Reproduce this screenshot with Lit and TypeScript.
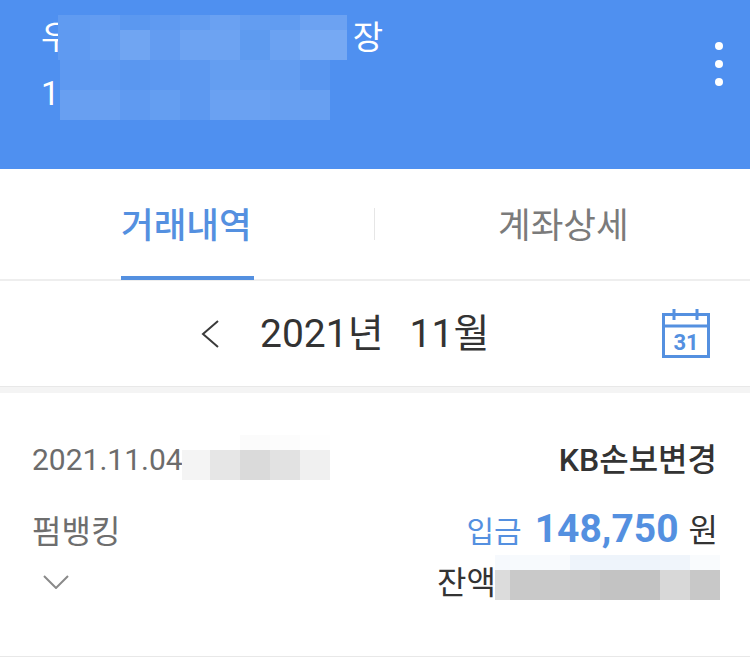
import { LitElement, html, css } from "lit";
import { customElement } from "lit/decorators.js";

type Mosaic = { cols: number[]; rows: number[]; colors: string[][] };

const headerMosaic: Mosaic = {
  cols: [32, 30, 30, 30, 30, 30, 30, 30, 47],
  rows: [15, 30, 30, 30],
  colors: [
    ["#609bf1", "#639cf1", "#5b98f0", "#5f9af1", "#639df1", "#6aa1f2", "#639df1", "#619cf1", "#6ca2f2"],
    ["#5f9af1", "#659ef1", "#70a5f2", "#639cf1", "#6da3f2", "#6da3f2", "#5e9bf0", "#6ba2f2", "#76a9f3"],
    ["#5e99f1", "#5e99f1", "#5a97f0", "#5c98f1", "#5d99f1", "#649ef1", "#649ef1", "#639df1", "#5996f0"],
    ["#689ff1", "#689ff1", "#5f9af1", "#649ef1", "#5d99f1", "#6aa1f2", "#6aa1f2", "#679ff1", "#679ff1"],
  ],
};
const dateMosaic: Mosaic = {
  cols: [28, 30, 30, 30, 30],
  rows: [15, 30],
  colors: [
    ["#ffffff", "#ffffff", "#fbfbfb", "#fcfcfc", "#fefefe"],
    ["#f4f4f4", "#e6e6e6", "#dadada", "#e2e2e2", "#f0f0f0"],
  ],
};
const balanceMosaic: Mosaic = {
  cols: [15, 30, 30, 30, 30, 30, 30, 30],
  rows: [15, 30],
  colors: [
    ["#f6f9fd", "#f7fafd", "#f8fafd", "#eef4fb", "#eef4fb", "#eef4fb", "#f0f5fb", "#f9fbfd"],
    ["#dcdcdc", "#c9c9c9", "#c9c9c9", "#c8c8c8", "#c3c3c3", "#c3c3c3", "#d8d8d8", "#c8c8c8"],
  ],
};

function mosaic(m: Mosaic, extra: string) {
  return html`<div
    class="mosaic ${extra}"
    style="grid-template-columns:${m.cols.map((c) => c + "px").join(" ")};grid-template-rows:${m.rows
      .map((r) => r + "px")
      .join(" ")}"
  >
    ${m.colors.flat().map((c) => html`<i style="background:${c}"></i>`)}
  </div>`;
}

@customElement("app-root")
export class AppRoot extends LitElement {
  static styles = css`
    :host {
      display: block;
      width: 750px;
      height: 657px;
      overflow: hidden;
      background: #fff;
      font-family: Roboto, "Noto Sans CJK KR", sans-serif;
    }
    .head {
      position: relative;
      height: 169px;
      box-sizing: border-box;
      padding: 15px 27px 0 41px;
      background: #4f90f0;
      color: #fff;
      font-size: 33px;
      line-height: 45px;
      display: flex;
      justify-content: space-between;
    }
    .title {
      display: flex;
      flex-direction: column;
      gap: 11px;
      width: 342px;
    }
    .title .line1 {
      display: flex;
      justify-content: space-between;
    }
    .mosaic {
      position: absolute;
      display: grid;
    }
    .mosaic i {
      display: block;
    }
    .m-head {
      left: 58px;
      top: 15px;
      clip-path: polygon(2px 45px, 289px 45px, 289px 0, 0 0, 0 45px, 2px 45px, 2px 105px, 272px 105px, 272px 45px);
    }
    .dots {
      display: flex;
      flex-direction: column;
      gap: 10px;
      padding-top: 27px;
    }
    .dots span {
      width: 8px;
      height: 8px;
      border-radius: 50%;
      background: #fff;
    }
    .tabs {
      position: relative;
      height: 112px;
      box-sizing: border-box;
      display: grid;
      grid-template-columns: 375px 375px;
      border-bottom: 2px solid #eeeeee;
    }
    .tab {
      display: flex;
      align-items: center;
      font-size: 35.5px;
      font-weight: 500;
      color: #7b7b7b;
      padding-bottom: 4px;
    }
    .tab.one {
      position: relative;
      color: #5490e0;
      padding-left: 121px;
    }
    .tab.two {
      padding-left: 123px;
      font-weight: 400;
    }
    .tab.one::before {
      content: "";
      position: absolute;
      left: 121px;
      bottom: -1px;
      width: 133px;
      height: 4px;
      background: #5490e0;
    }
    .tab.one::after {
      content: "";
      position: absolute;
      right: 0;
      top: 39px;
      width: 1px;
      height: 32px;
      background: #e6e6e6;
    }
    .month {
      height: 106px;
      box-sizing: border-box;
      display: flex;
      align-items: center;
      padding: 0 40px 0 200px;
      color: #333333;
      border-bottom: 1px solid #e8e8e8;
    }
    .month .back {
      width: 20px;
      height: 30px;
      margin-right: 40px;
    }
    .month .label {
      flex: 1;
      display: flex;
      gap: 26px;
      font-size: 39px;
      line-height: 50px;
    }
    .band {
      height: 6px;
      background: #f4f4f4;
    }
    .row {
      position: relative;
      height: 264px;
      box-sizing: border-box;
      border-bottom: 1px solid #e8e8e8;
      padding: 45px 33px 0 32px;
      display: grid;
      grid-template-columns: 1fr auto;
      grid-template-rows: 44px 72px 1fr;
      align-items: end;
    }
    .date {
      font-size: 30px;
      color: #6c6c6c;
      line-height: 44px;
    }
    .payee {
      font-size: 32px;
      font-weight: 500;
      color: #333;
      line-height: 44px;
      text-align: right;
    }
    .name {
      font-size: 32px;
      color: #6e6e6e;
      line-height: 44px;
    }
    .amount {
      margin-right: -1px;
      font-size: 30px;
      color: #5490e0;
      line-height: 44px;
      text-align: right;
      white-space: nowrap;
    }
    .amount b {
      font-size: 39px;
      font-weight: 700;
      margin: 0 10px 0 13px;
    }
    .amount span {
      font-size: 32px;
      color: #333;
    }
    .chev {
      align-self: start;
      width: 26px;
      height: 14px;
      margin: 21px 0 0 11px;
    }
    .balance {
      align-self: start;
      font-size: 32px;
      color: #333;
      line-height: 44px;
      padding: 7px 221px 0 0;
      text-align: right;
    }
    .m-date {
      left: 182px;
      top: 42px;
    }
    .m-bal {
      left: 495px;
      top: 162px;
    }
  `;

  render() {
    return html`
      <div class="head">
        <div class="title">
          <div class="line1"><span>우</span><span>장</span></div>
          <div>1</div>
        </div>
        <div class="dots"><span></span><span></span><span></span></div>
        ${mosaic(headerMosaic, "m-head")}
      </div>
      <div class="tabs">
        <div class="tab one">거래내역</div>
        <div class="tab two">계좌상세</div>
      </div>
      <div class="month">
        <svg class="back" viewBox="0 0 20 30" fill="none" stroke="#3a3a3a" stroke-width="2">
          <path d="M18 2 L3 15 L18 28" />
        </svg>
        <div class="label"><span>2021년</span><span>11월</span></div>
        <svg width="48" height="49" viewBox="0 0 48 49" fill="none" stroke="#5490e0" stroke-width="3">
          <path d="M1.5 5.5 H46.5 V47.5 H1.5 Z M1.5 17 H46.5 M12 0 V11 M35 0 V11" />
          <text
            x="24"
            y="41"
            text-anchor="middle"
            fill="#5490e0"
            stroke="none"
            font-size="22"
            font-weight="700"
            font-family="Roboto, sans-serif"
          >31</text>
        </svg>
      </div>
      <div class="band"></div>
      <div class="row">
        <div class="date">2021.11.04</div>
        <div class="payee">KB손보변경</div>
        <div class="name">펌뱅킹</div>
        <div class="amount">입금<b>148,750</b><span>원</span></div>
        <svg class="chev" viewBox="0 0 26 14" fill="none" stroke="#8a8a8a" stroke-width="2">
          <path d="M1 1 L13 13 L25 1" />
        </svg>
        <div class="balance">잔액</div>
        ${mosaic(dateMosaic, "m-date")} ${mosaic(balanceMosaic, "m-bal")}
      </div>
    `;
  }
}
